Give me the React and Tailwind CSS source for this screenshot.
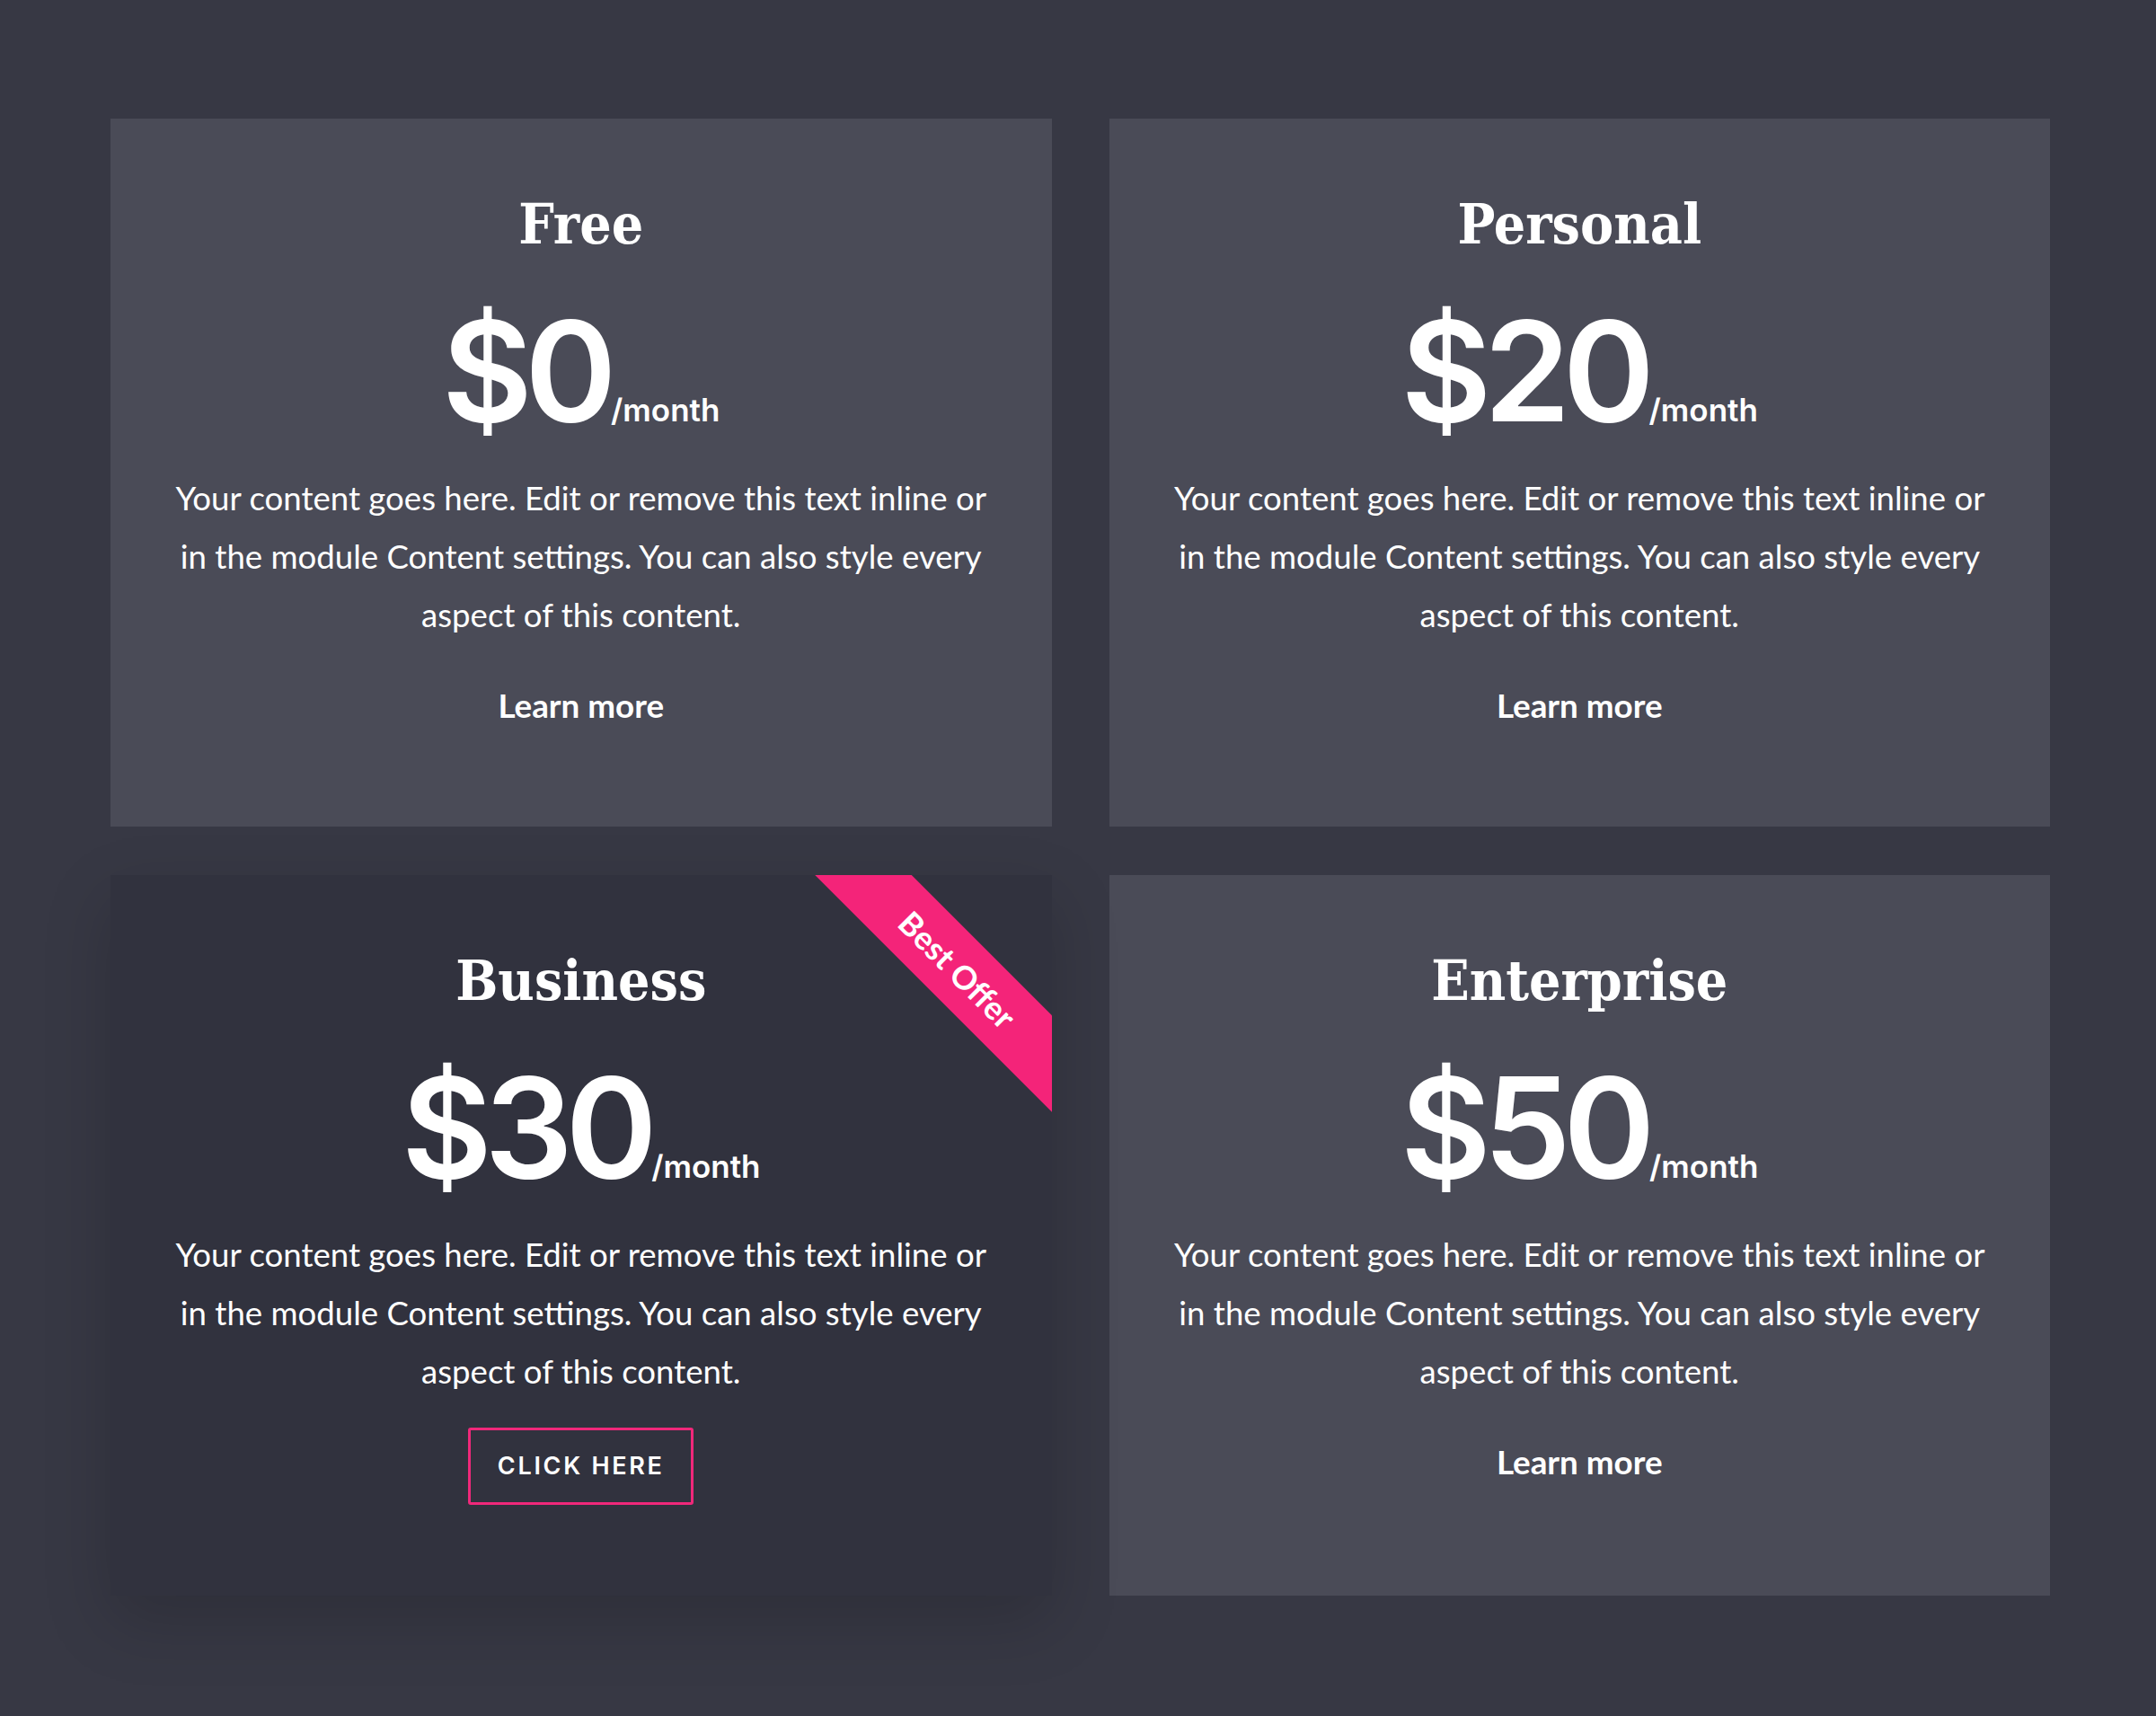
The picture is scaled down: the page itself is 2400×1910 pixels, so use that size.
const plans = [
  { name: 'Free', price: '$0' },
  { name: 'Personal', price: '$20' },
  { name: 'Business', price: '$30', featured: true },
  { name: 'Enterprise', price: '$50' },
];

function Card({ plan }) {
  const featured = plan.featured;
  return (
    <div
      className={
        featured
          ? 'relative z-10 flex flex-col items-center overflow-hidden bg-[#31323e] pt-[87px] shadow-[0_28px_70px_rgba(0,0,0,0.17)]'
          : 'relative flex flex-col items-center overflow-hidden bg-[#4a4b57] pt-[87px]'
      }
    >
      {featured && (
        <div className="absolute right-[-115px] top-[67px] flex h-[76px] w-[440px] rotate-45 items-center justify-center bg-[#f42479]">
          <span className="font-['Lato',sans-serif] text-[36px] font-bold leading-none text-white">Best Offer</span>
        </div>
      )}
      <h2 className="font-['DejaVu_Serif',serif] text-[62px] font-bold leading-none text-white [font-stretch:condensed]">
        {plan.name}
      </h2>
      <div className="mt-[54px] flex items-baseline leading-none text-white">
        <span className="font-['Inter',sans-serif] text-[155px] font-semibold leading-none tracking-[-0.055em]">
          {plan.price}
        </span>
        <span className="ml-[2px] font-['Inter',sans-serif] text-[35px] font-semibold leading-none">/month</span>
      </div>
      <p className="mt-[32px] whitespace-nowrap text-center font-['Lato',sans-serif] text-[36.6px] leading-[65px] text-white">
        Your content goes here. Edit or remove this text inline or
        <br />
        in the module Content settings. You can also style every
        <br />
        aspect of this content.
      </p>
      {featured ? (
        <button className="mt-[30px] flex h-[86px] w-[251px] items-center justify-center rounded-[3px] border-[3px] border-[#f0287a] font-['Inter',sans-serif] text-[27px] font-semibold tracking-[0.1em] text-white">
          CLICK HERE
        </button>
      ) : (
        <a className="mt-[50px] font-['Lato',sans-serif] text-[36.8px] font-bold leading-none text-white">Learn more</a>
      )}
    </div>
  );
}

export default function App() {
  return (
    <div className="min-h-[1910px] w-full bg-[#373844] pl-[123px] pt-[132px]">
      <div className="grid w-[2159px] grid-cols-2 grid-rows-[788px_802px] gap-x-[64px] gap-y-[54px]">
        {plans.map((p) => (
          <Card key={p.name} plan={p} />
        ))}
      </div>
    </div>
  );
}
